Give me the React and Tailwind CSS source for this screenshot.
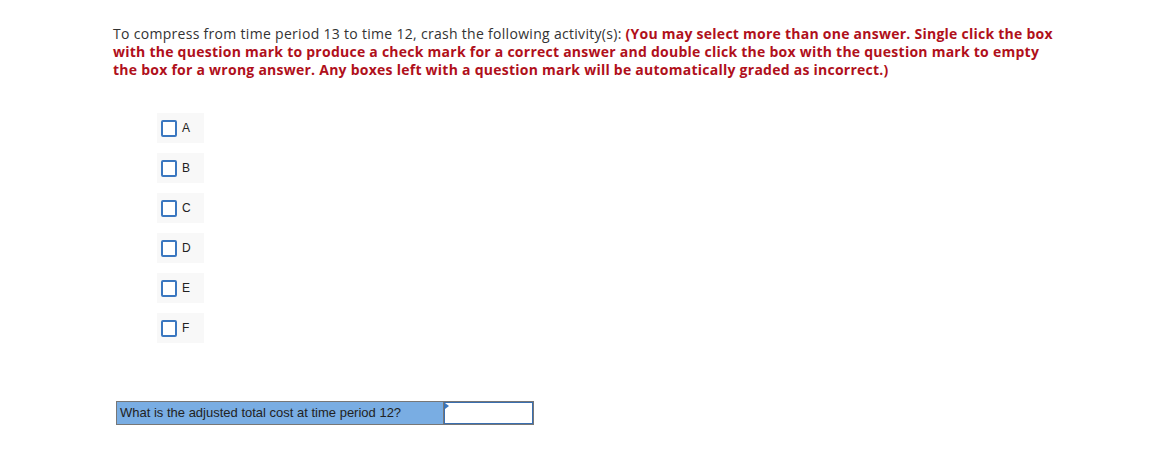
import React from 'react';

export default function App() {
  const options = ['A', 'B', 'C', 'D', 'E', 'F'];

  return (
    <div className="w-[1173px] h-[474px] bg-white relative" style={{ fontFamily: '"Open Sans", sans-serif' }}>
      <div className="pt-[25px] pl-[113px] w-[1062px]">
        <p className="text-[14px] leading-[18px] text-[#333] tracking-[0.3px]">
          To compress from time period 13 to time 12, crash the following activity(s):{' '}
          <strong className="text-[#b0101b] font-bold tracking-[0.25px]">
            (You may select more than one answer. Single click the box with the question mark to produce a check mark
            for a correct answer and double click the box with the question mark to empty the box for a wrong answer.
            Any boxes left with a question mark will be automatically graded as incorrect.)
          </strong>
        </p>
      </div>

      <div className="flex flex-col gap-[10px] pl-[157px] mt-[34px]">
        {options.map((opt) => (
          <div key={opt} className="w-[47px] h-[30px] bg-[#f8f8f8] flex items-center pl-[4px]">
            <span className="w-[16px] h-[17px] border-2 border-[#3a77c0] rounded-[2px] bg-white" />
            <span
              className="ml-[5px] text-[12px] text-[#222]"
              style={{ fontFamily: '"Liberation Sans", Arial, sans-serif' }}
            >
              {opt}
            </span>
          </div>
        ))}
      </div>

      <div className="flex pl-[116px] mt-[58px]" style={{ fontFamily: '"Liberation Sans", Arial, sans-serif' }}>
        <div className="w-[328px] h-[24px] bg-[#79ade3] border border-[#777] flex items-center pl-[3px] text-[13px] text-[#222]">
          What is the adjusted total cost at time period 12?
        </div>
        <div className="w-[90px] h-[24px] border border-[#777] border-l-0 relative">
          <div className="absolute inset-0 border border-[#3a6fb0] bg-white" />
          <div className="absolute left-[1px] top-[1px] w-0 h-0 border-t-[3px] border-b-[3px] border-l-[4px] border-t-transparent border-b-transparent border-l-[#3a77c0]" />
        </div>
      </div>
    </div>
  );
}
